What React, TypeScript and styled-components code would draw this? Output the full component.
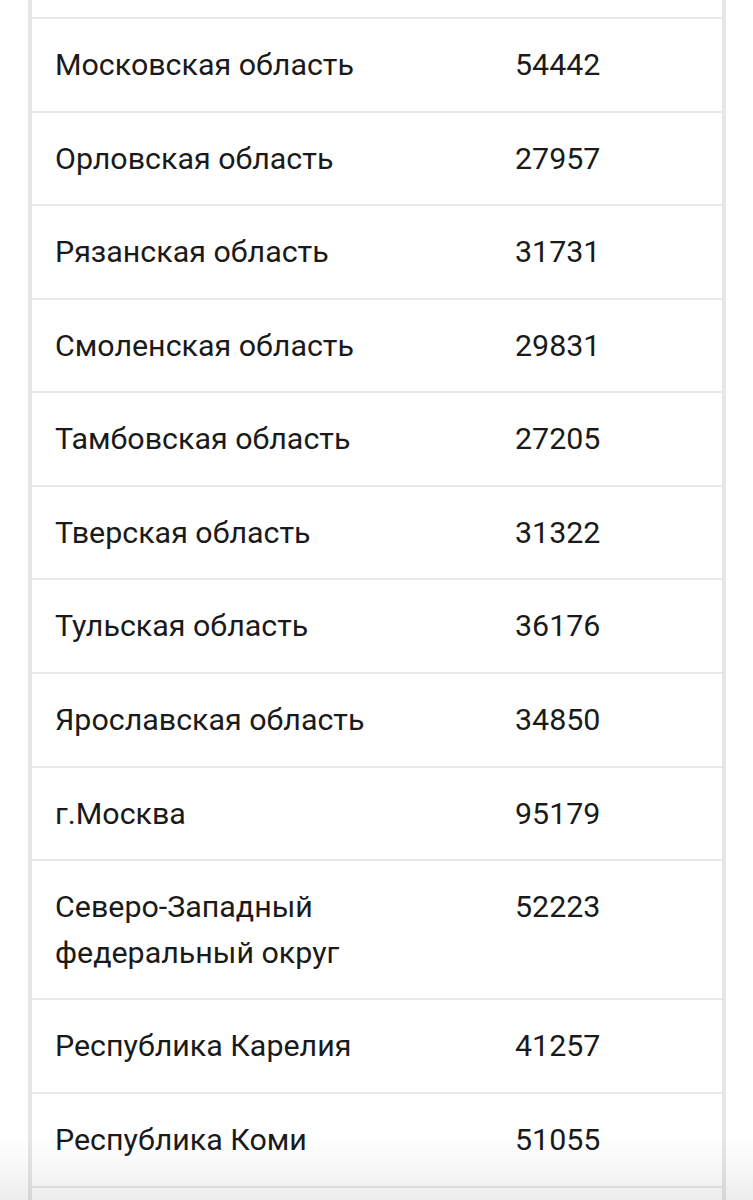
import React from "react";
import styled, { createGlobalStyle } from "styled-components";

const Global = createGlobalStyle`
  html, body {
    margin: 0;
    padding: 0;
    background: #ffffff;
    height: 1200px;
    overflow: hidden;
  }
  body {
    font-family: Roboto, "Noto Sans", "Liberation Sans", sans-serif;
    color: #1a1a1a;
  }
`;

const Page = styled.div`
  position: relative;
  height: 1200px;
  overflow: hidden;
`;

const Table = styled.div`
  margin-left: 28px;
  width: 690px;
  border-left: 4px solid #e6e6e6;
  border-right: 4px solid #e6e6e6;
  display: flex;
  flex-direction: column;
`;

const Stub = styled.div<{ $h: number }>`
  height: ${(p) => p.$h}px;
  border-bottom: 2px solid #e9e9e9;
  flex-shrink: 0;
`;

const Row = styled.div`
  display: grid;
  grid-template-columns: 460px 1fr;
  border-bottom: 2px solid #e9e9e9;
`;

const Cell = styled.div`
  padding: 22.95px 23px 22.95px 23px;
  font-size: 30.4px;
  line-height: 45.7px;
  font-weight: 400;
  color: #1a1a1a;
  letter-spacing: 0;
`;

const BottomFade = styled.div`
  position: absolute;
  left: 0;
  right: 0;
  bottom: 0;
  height: 64px;
  pointer-events: none;
  background: linear-gradient(
    to bottom,
    rgba(0, 0, 0, 0) 0%,
    rgba(0, 0, 0, 0.03) 50%,
    rgba(0, 0, 0, 0.075) 100%
  );
`;

const rows: [string, string][] = [
  ["Московская область", "54442"],
  ["Орловская область", "27957"],
  ["Рязанская область", "31731"],
  ["Смоленская область", "29831"],
  ["Тамбовская область", "27205"],
  ["Тверская область", "31322"],
  ["Тульская область", "36176"],
  ["Ярославская область", "34850"],
  ["г.Москва", "95179"],
  ["Северо-Западный федеральный округ", "52223"],
  ["Республика Карелия", "41257"],
  ["Республика Коми", "51055"],
];

export default function App() {
  return (
    <Page>
      <Global />
      <Table>
        <Stub $h={17} />
        {rows.map(([name, value]) => (
          <Row key={name}>
            <Cell>{name}</Cell>
            <Cell>{value}</Cell>
          </Row>
        ))}
        <Stub $h={60} />
      </Table>
      <BottomFade />
    </Page>
  );
}
